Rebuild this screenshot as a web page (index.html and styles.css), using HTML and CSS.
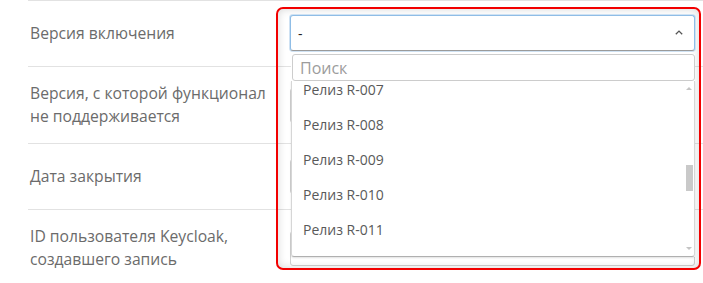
FILE: index.html
```html
<!DOCTYPE html>
<html lang="ru">
<head>
    <meta charset="UTF-8">
    <title>Карточка функционала</title>
    <link rel="stylesheet" href="styles.css">
</head>
<body>
    <div class="form">
        <div class="row">
            <div class="label">Версия включения</div>
            <div class="field">
                <div class="picker">
                    <div class="frame"></div>
                    <div class="select">
                        <span class="value">-</span>
                        <svg class="chevron" width="8" height="5" viewBox="0 0 8 5">
                            <path d="M0.8 4.3 L4 1.1 L7.2 4.3" fill="none" stroke="#555" stroke-width="1.3"/>
                        </svg>
                    </div>
                    <div class="dropdown">
                        <input class="search" type="text" placeholder="Поиск">
                        <div class="list">
                            <ul class="options">
                                <li>Релиз R-007</li>
                                <li>Релиз R-008</li>
                                <li>Релиз R-009</li>
                                <li>Релиз R-010</li>
                                <li>Релиз R-011</li>
                            </ul>
                            <span class="arrow up"></span>
                            <span class="thumb"></span>
                            <span class="arrow down"></span>
                        </div>
                    </div>
                </div>
            </div>
        </div>
        <div class="row">
            <div class="label">Версия, с которой функционал не поддерживается</div>
            <div class="field"><div class="input"></div></div>
        </div>
        <div class="row">
            <div class="label">Дата закрытия</div>
            <div class="field"><div class="input"></div></div>
        </div>
        <div class="row">
            <div class="label">ID пользователя Keycloak, создавшего запись</div>
            <div class="field"><div class="input"></div></div>
        </div>
    </div>
</body>
</html>
```

FILE: styles.css
```css
body {
    margin: 0;
    font-family: 'Open Sans', 'Noto Sans', sans-serif;
    background-color: #fff;
    color: #333;
    overflow: hidden;
}
.form {
    margin-left: 28px;
}
.row {
    display: grid;
    grid-template-columns: 262px 1fr;
    align-items: center;
    border-top: 1px solid #e2e2e2;
    padding: 15px 8px 15px 0;
}
.label {
    padding-left: 2px;
    padding-right: 10px;
    font-size: 15.7px;
    line-height: 23px;
    color: #6b6b6b;
}
.field {
    min-height: 34px;
}
.input {
    height: 33px;
    border: 1px solid #d0d0d0;
    border-radius: 3px;
}
.picker {
    position: relative;
    margin-top: -1px;
}
.frame {
    position: absolute;
    left: -14px;
    top: -8px;
    right: -6px;
    height: 259px;
    border: 2px solid #f20000;
    border-radius: 7px;
    box-shadow: inset 0 0 9px rgba(0,0,0,0.16);
    z-index: 0;
}
.select {
    position: relative;
    z-index: 1;
    height: 34px;
    display: flex;
    align-items: center;
    justify-content: space-between;
    padding: 0 11px 0 7px;
    background-color: #fff;
    border: 1px solid #8fbde6;
    border-bottom-color: #9a9a9a;
    border-radius: 3px;
    box-shadow: 0 0 0 1px #cfe2f3;
}
.value {
    font-size: 14px;
    color: #222;
    margin-top: 1px;
}
.chevron {
    display: block;
    margin-top: -2px;
}
.dropdown {
    position: absolute;
    z-index: 1;
    top: 39px;
    left: 1px;
    right: 0;
    background-color: #fff;
}
.search {
    display: block;
    box-sizing: border-box;
    width: calc(100% - 1px);
    margin-left: 1px;
    height: 27px;
    border: 1px solid #cdcdcd;
    border-radius: 3px;
    padding: 0 7px;
    font-family: 'Open Sans', 'Noto Sans', sans-serif;
    font-size: 16px;
    color: #333;
    outline: none;
}
.search::placeholder {
    color: #9c9c9c;
}
.list {
    position: relative;
    height: 175px;
    overflow: hidden;
    border: 1px solid #d6d6d6;
    border-top: none;
    border-bottom-color: #b0b0b0;
    border-radius: 0 0 3px 3px;
    box-shadow: 0 1px 2px rgba(0,0,0,0.12);
}
.options {
    list-style: none;
    margin: -9px 0 0;
    padding: 0;
}
.options li {
    height: 35px;
    line-height: 35px;
    padding-left: 11px;
    font-size: 14px;
    color: #595959;
}
.thumb {
    position: absolute;
    right: 1px;
    top: 84px;
    width: 7px;
    height: 26px;
    background-color: #c9c9c9;
}
.arrow {
    position: absolute;
    right: 2px;
    width: 0;
    height: 0;
    border-left: 3px solid transparent;
    border-right: 3px solid transparent;
}
.arrow.up {
    top: 6px;
    border-bottom: 3px solid #c4c4c4;
}
.arrow.down {
    bottom: 6px;
    border-top: 3px solid #c4c4c4;
}
```
